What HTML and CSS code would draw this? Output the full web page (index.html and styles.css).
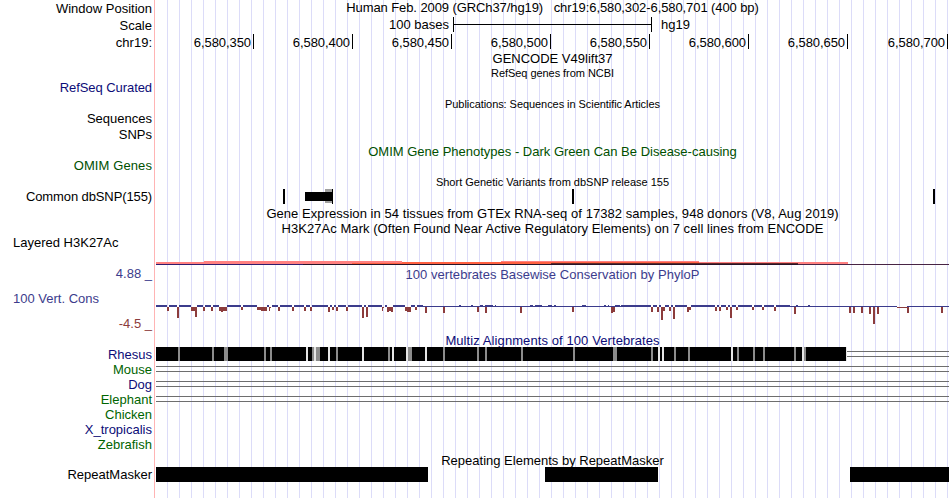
FILE: index.html
```html
<!DOCTYPE html>
<html lang="en">
<head>
  <meta charset="UTF-8">
  <title>Human hg19 chr19:6,580,302-6,580,701</title>
  <link rel="stylesheet" href="styles.css">
</head>
<body>
  <div class="browser">
    <div class="row h17">
      <div class="label top">Window Position</div>
      <div class="track"><div class="title position">Human Feb. 2009 (GRCh37/hg19)   chr19:6,580,302-6,580,701 (400 bp)</div></div>
    </div>
    <div class="row h17">
      <div class="label top">Scale</div>
      <div class="track scale">
        <span class="scale-text">100 bases</span>
        <div class="scale-bar"><div></div></div>
        <span>hg19</span>
      </div>
    </div>
    <div class="row h17">
      <div class="label top">chr19:</div>
      <div class="track ruler">
        <span>6,580,350</span><span>6,580,400</span><span>6,580,450</span><span>6,580,500</span><span>6,580,550</span><span>6,580,600</span><span>6,580,650</span><span>6,580,700</span>
      </div>
    </div>
    <div class="row h15">
      <div class="label"></div>
      <div class="track"><div class="title gencode">GENCODE V49lift37</div></div>
    </div>
    <div class="row h31">
      <div class="label blue refseq-label">RefSeq Curated</div>
      <div class="track"><div class="title small refseq">RefSeq genes from NCBI</div></div>
    </div>
    <div class="row h30">
      <div class="label">Sequences</div>
      <div class="track"><div class="title small pubs">Publications: Sequences in Scientific Articles</div></div>
    </div>
    <div class="row h17">
      <div class="label dense">SNPs</div>
      <div class="track"></div>
    </div>
    <div class="row h31">
      <div class="label omim omim-label">OMIM Genes</div>
      <div class="track"><div class="title omim">OMIM Gene Phenotypes - Dark Green Can Be Disease-causing</div></div>
    </div>
    <div class="row h31">
      <div class="label snp-label">Common dbSNP(155)</div>
      <div class="track">
        <div class="title small short snp">Short Genetic Variants from dbSNP release 155</div>
        <svg width="793" height="15" viewBox="156 189 793 15">
          <path class="gray" d="M325 189h7v14h-7z"/>
          <path d="M283 189h2v15h-2zM305 192h28v9h-28zM332 189h1v15h-1zM572 189h2v15h-2zM933 189h2v15h-2z"/>
        </svg>
      </div>
    </div>
    <div class="row h15">
      <div class="label"></div>
      <div class="track"><div class="title gtex">Gene Expression in 54 tissues from GTEx RNA-seq of 17382 samples, 948 donors (V8, Aug 2019)</div></div>
    </div>
    <div class="row h45">
      <div class="label left">Layered H3K27Ac</div>
      <div class="track">
        <div class="title h3k">H3K27Ac Mark (Often Found Near Active Regulatory Elements) on 7 cell lines from ENCODE</div>
        <svg width="793" height="30" viewBox="156 236 793 30">
          <path fill="#ff8080" d="M156 262h692v2h-692zM204 261h198v1h-198zM501 261h198v1h-198z"/>
          <path fill="#ff6040" d="M352 263h199v1h-199zM402 262h99v1h-99zM501 262h198v1h-198z"/>
          <path fill="#602828" d="M551 263h247v1h-247z"/>
          <path fill="#301c6c" d="M156 264h147v1h-147z"/>
          <path fill="#281428" d="M303 264h495v1h-495z"/>
          <path fill="#482444" d="M798 264h151v1h-151z"/>
        </svg>
      </div>
    </div>
    <div class="row h67">
      <div class="label phylop-label">
        <div class="limit">4.88 _</div>
        <div class="name">100 Vert. Cons</div>
        <div class="limit low">-4.5 _</div>
      </div>
      <div class="track phylop">
        <div class="title cons">100 vertebrates Basewise Conservation by PhyloP</div>
        <svg width="793" height="50" viewBox="156 282 793 50">
          <!-- conserved bases, above the axis -->
          <path class="plus" d="M156 305h11v2h-11zM169 305h8v2h-8zM179 305h12v2h-12zM197 305h6v2h-6zM205 305h6v2h-6zM213 305h6v2h-6zM227 305h14v2h-14zM243 305h14v2h-14zM267 305h2v2h-2zM272 305h6v2h-6zM280 305h12v2h-12zM294 305h10v2h-10zM306 305h4v2h-4zM312 305h16v2h-16zM330 305h2v2h-2zM334 305h2v2h-2zM338 305h8v2h-8zM348 305h14v2h-14zM364 305h2v2h-2zM368 305h14v2h-14zM385 305h2v2h-2zM393 305h12v2h-12zM411 305h4v2h-4zM417 305h6v2h-6z"/>
          <path class="plus" d="M423 306h188v1h-188zM459 305h2v1h-2zM471 305h2v1h-2zM480 305h3v1h-3zM485 305h8v1h-8zM495 305h1v1h-1zM530 305h3v1h-3zM535 305h7v1h-7zM548 305h4v1h-4zM554 305h2v1h-2zM582 305h4v1h-4zM604 305h2v1h-2zM608 305h1v1h-1zM611 306h40v1h-40zM615 305h5v1h-5zM621 305h30v1h-30z"/>
          <path class="plus" d="M653 305h4v2h-4zM659 305h2v2h-2zM665 305h4v2h-4zM671 305h2v2h-2zM675 305h12v2h-12zM691 305h24v2h-24zM717 305h2v2h-2zM721 305h5v2h-5zM728 305h2v2h-2zM732 305h4v2h-4zM738 305h14v2h-14zM754 305h8v2h-8zM764 305h10v2h-10zM776 305h14v2h-14zM790 306h107v1h-107zM796 305h2v1h-2zM808 305h2v1h-2zM907 306h42v1h-42z"/>
          <!-- fast-evolving bases, below the axis -->
          <path class="minus" d="M167 307h2v4h-2zM177 307h2v11h-2zM191 307h4v4h-4zM195 307h2v10h-2zM203 307h2v4h-2zM211 307h2v4h-2zM219 307h8v4h-8zM221 311h2v1h-2zM241 307h2v3h-2zM257 307h4v3h-4zM261 307h6v4h-6zM269 307h1v4h-1zM270 307h1v1h-1zM278 307h2v4h-2zM292 307h2v4h-2zM304 307h2v4h-2zM310 307h2v4h-2zM328 307h2v5h-2zM332 307h2v3h-2zM336 307h2v4h-2zM346 307h2v4h-2zM362 307h2v11h-2zM366 307h2v10h-2zM382 307h1v4h-1zM383 307h1v1h-1zM387 307h6v4h-6zM387 311h2v1h-2zM391 311h2v1h-2zM405 307h2v4h-2zM407 307h4v5h-4zM415 307h2v3h-2zM425 307h2v6h-2zM443 307h2v6h-2z"/>
          <path class="minus" d="M477 307h2v5h-2zM485 307h2v6h-2zM520 307h2v6h-2zM572 307h2v5h-2zM611 307h4v5h-4zM611 312h2v1h-2zM651 307h2v5h-2zM657 307h2v5h-2zM661 307h2v13h-2zM663 307h2v4h-2zM669 307h2v4h-2zM673 307h2v12h-2zM687 307h2v5h-2zM689 307h2v3h-2zM715 307h2v4h-2zM719 307h2v4h-2zM726 307h2v3h-2zM730 307h2v11h-2zM736 307h2v3h-2zM752 307h2v3h-2zM762 307h2v3h-2zM774 307h2v4h-2zM794 307h2v7h-2zM849 307h2v6h-2zM853 307h2v6h-2zM861 307h2v6h-2zM869 307h2v7h-2zM873 307h2v17h-2zM877 307h2v7h-2zM897 307h10v1h-10zM907 307h2v6h-2zM941 307h2v6h-2z"/>
        </svg>
      </div>
    </div>
    <div class="row h14">
      <div class="label"></div>
      <div class="track"><div class="title blue multiz">Multiz Alignments of 100 Vertebrates</div></div>
    </div>
    <div class="row h15">
      <div class="label dense blue">Rhesus</div>
      <div class="track">
        <svg width="793" height="15" viewBox="156 347 793 15">
          <path d="M156 347h690v14h-690z"/>
          <path class="mismatch" d="M178 347h2v14h-2zM212 347h2v14h-2zM224 347h4v14h-4zM264 347h2v14h-2zM270 347h2v14h-2zM312 347h2v14h-2zM316 347h4v14h-4zM336 347h2v14h-2zM388 347h2v14h-2zM408 347h4v14h-4zM443 347h2v14h-2zM477 347h2v14h-2zM485 347h2v14h-2zM521 347h2v14h-2zM573 347h2v14h-2zM613 347h4v14h-4zM651 347h2v14h-2zM674 347h2v14h-2zM688 347h2v14h-2zM737 347h2v14h-2zM753 347h2v14h-2zM763 347h2v14h-2zM794 347h2v14h-2zM804 347h2v14h-2z"/>
          <path class="break" d="M306 347h2v14h-2zM314 347h2v14h-2zM328 347h2v14h-2zM362 347h2v14h-2zM392 347h2v14h-2zM406 347h2v14h-2zM425 347h2v14h-2zM658 347h2v14h-2zM662 347h2v14h-2zM731 347h2v14h-2zM802 347h2v14h-2zM846 347h1v14h-1z"/>
          <path class="gap" d="M847 351h102v1h-102zM847 356h102v1h-102z"/>
        </svg>
      </div>
    </div>
    <div class="row h15">
      <div class="label dense green">Mouse</div>
      <div class="track"><div class="unaligned"></div></div>
    </div>
    <div class="row h15">
      <div class="label dense blue">Dog</div>
      <div class="track"><div class="unaligned"></div></div>
    </div>
    <div class="row h15">
      <div class="label dense green">Elephant</div>
      <div class="track"><div class="unaligned"></div></div>
    </div>
    <div class="row h15">
      <div class="label dense green">Chicken</div>
      <div class="track"></div>
    </div>
    <div class="row h15">
      <div class="label dense blue">X_tropicalis</div>
      <div class="track"></div>
    </div>
    <div class="row h16">
      <div class="label dense green">Zebrafish</div>
      <div class="track"></div>
    </div>
    <div class="row last">
      <div class="label">RepeatMasker</div>
      <div class="track">
        <div class="title short repeat">Repeating Elements by RepeatMasker</div>
        <svg width="793" height="15" viewBox="156 467 793 15">
          <path d="M156 467h272v15h-272zM545 467h113v15h-113zM850 467h99v15h-99z"/>
        </svg>
      </div>
    </div>
  </div>
</body>
</html>
```
FILE: styles.css
```css
body {
  margin: 0;
  background-color: #fff;
  font-family: "Liberation Sans", Arial, sans-serif;
  font-size: 13px;
  line-height: 15px;
  color: #000;
}
.browser {
  width: 949px;
  height: 498px;
  display: flex;
  flex-direction: column;
  overflow: hidden;
}
.row {
  display: flex;
  flex-shrink: 0;
}
.h14 { height: 14px; }
.h15 { height: 15px; }
.h16 { height: 16px; }
.h17 { height: 17px; }
.h30 { height: 30px; }
.h31 { height: 31px; }
.h45 { height: 45px; }
.h67 { height: 67px; }
.last {
  flex: 1;
}
.label {
  width: 154px;
  box-sizing: border-box;
  padding: 14px 2px 0 13px;
  text-align: right;
  white-space: nowrap;
}
.label.top {
  padding-top: 1px;
}
.label.dense {
  padding-top: 0;
}
.label.left {
  text-align: left;
}
.refseq-label {
  letter-spacing: -0.07px;
}
.omim-label {
  letter-spacing: 0.1px;
}
.snp-label {
  letter-spacing: -0.11px;
}
/* blue guidelines every 12px, pink edge on the left */
.track {
  width: 793px;
  border-left: 1px solid #ffb4b4;
  padding-left: 1px;
  background-image: linear-gradient(90deg, #dcdcf8 1px, transparent 1px);
  background-size: 12px 100%;
  background-position: 12px 0;
  background-clip: content-box;
}
.track svg {
  display: block;
  shape-rendering: crispEdges;
}
.title {
  height: 15px;
  text-align: center;
  white-space: pre;
}
.title.small {
  font-size: 11px;
}
.title.short {
  height: 14px;
}
.position {
  letter-spacing: -0.09px;
}
.refseq {
  letter-spacing: -0.05px;
}
.pubs {
  letter-spacing: -0.06px;
}
.gtex {
  letter-spacing: 0.055px;
}
.h3k {
  letter-spacing: 0.05px;
}
.cons {
  letter-spacing: 0.04px;
}
.multiz {
  letter-spacing: 0.09px;
}
.blue {
  color: #0c0c78;
}
.green {
  color: #006400;
}
.omim {
  color: #005000;
}
.scale {
  display: flex;
}
.scale-text {
  width: 293px;
  text-align: right;
}
.scale-bar {
  width: 197px;
  height: 15px;
  margin: 0 9px 0 4px;
  border-left: 1px solid #000;
  border-right: 1px solid #000;
}
.scale-bar div {
  height: 7px;
  border-bottom: 1px solid #000;
}
.ruler {
  display: flex;
}
.ruler span {
  width: 99px;
  height: 15px;
  box-sizing: border-box;
  padding: 1px 2px 0 0;
  border-right: 1px solid #000;
  text-align: right;
  flex-shrink: 0;
  letter-spacing: -0.07px;
}
.ruler span:first-child {
  width: 98px;
}
.ruler span:last-child {
  width: 100px;
}
.gray {
  fill: #a0a0a0;
}
.label.phylop-label {
  padding-top: 0;
}
.limit {
  color: #3c3c8c;
}
.name {
  margin: 10px 0;
  text-align: left;
  color: #3c3c8c;
}
.limit.low {
  color: #8c3c3c;
}
.phylop .title {
  padding-top: 1px;
  color: #3c3c8c;
}
.plus {
  fill: #3c3c8c;
}
.minus {
  fill: #8c3c3c;
}
.mismatch {
  fill: #8c8c8c;
}
.break {
  fill: #e6e6e6;
}
.gap {
  fill: #6e6e6e;
}
.unaligned {
  height: 4px;
  margin-top: 4px;
  border-top: 1px solid #6e6e6e;
  border-bottom: 1px solid #6e6e6e;
}
```
